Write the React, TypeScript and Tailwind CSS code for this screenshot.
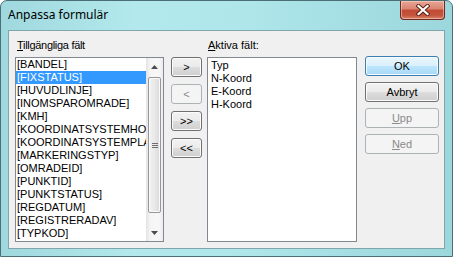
import React from "react";

const fields = [
  "[BANDEL]",
  "[FIXSTATUS]",
  "[HUVUDLINJE]",
  "[INOMSPAROMRADE]",
  "[KMH]",
  "[KOORDINATSYSTEMHOJD]",
  "[KOORDINATSYSTEMPLAN]",
  "[MARKERINGSTYP]",
  "[OMRADEID]",
  "[PUNKTID]",
  "[PUNKTSTATUS]",
  "[REGDATUM]",
  "[REGISTRERADAV]",
  "[TYPKOD]",
];

const active = ["Typ", "N-Koord", "E-Koord", "H-Koord"];

type BtnProps = {
  children: React.ReactNode;
  disabled?: boolean;
  isDefault?: boolean;
};

function WinButton({ children, disabled, isDefault }: BtnProps) {
  let look =
    "border-[#707070] text-black bg-[linear-gradient(to_bottom,#f2f2f2_0%,#ebebeb_50%,#dddddd_50%,#cfcfcf_100%)] shadow-[inset_0_0_0_1px_#fbfbfb]";
  if (isDefault)
    look =
      "border-[#3c7fb1] text-black bg-[linear-gradient(to_bottom,#eaf6fd_0%,#d9f0fc_50%,#bee6fd_50%,#a7d9f5_100%)] shadow-[inset_0_0_0_1px_#f4fbff]";
  if (disabled) look = "border-[#adb2b5] text-[#8a8a8a] bg-[#f4f4f4]";
  return (
    <div className={`flex h-[20px] items-center justify-center rounded-[3px] border text-[11px] leading-none ${look}`}>
      {children}
    </div>
  );
}

function Arrow({ up }: { up?: boolean }) {
  return (
    <svg width="7" height="4" viewBox="0 0 7 4">
      <path d={up ? "M0 4 L3.5 0 L7 4 Z" : "M0 0 L3.5 4 L7 0 Z"} fill="#4d4d4d" />
    </svg>
  );
}

function ScrollBar() {
  return (
    <div className="flex w-[17px] flex-col bg-[linear-gradient(to_right,#e3e3e3,#f5f5f5_25%,#f7f7f7_75%,#ececec)]">
      <div className="flex h-[17px] items-center justify-center">
        <Arrow up />
      </div>
      <div className="flex-1 px-[2px] pt-[2px]">
        <div className="flex h-[136px] items-center justify-center rounded-[2px] border border-[#979797] bg-[linear-gradient(to_right,#f3f3f3,#e9e9e9_50%,#d9d9d9)] shadow-[inset_0_0_0_1px_#fafafa]">
          <div className="flex flex-col gap-[1px]">
            <div className="h-[1px] w-[6px] bg-[#6f6f6f]" />
            <div className="h-[1px] w-[6px] bg-[#6f6f6f]" />
            <div className="h-[1px] w-[6px] bg-[#6f6f6f]" />
          </div>
        </div>
      </div>
      <div className="flex h-[17px] items-center justify-center">
        <Arrow />
      </div>
    </div>
  );
}

function CloseButton() {
  return (
    <div className="ml-auto mr-[7px] flex h-[19px] w-[45px] items-center justify-center rounded-b-[4px] border border-t-0 border-[#6e2a1e] bg-[linear-gradient(to_bottom,#e8a696_0%,#d98371_45%,#c24a33_50%,#c4563e_80%,#d8856a_100%)] shadow-[inset_0_0_0_1px_rgba(255,220,210,0.5)]">
      <svg width="14" height="12" viewBox="0 0 14 12">
        <path d="M2.5 2 L11.5 10 M11.5 2 L2.5 10" stroke="#5a1e14" strokeWidth="4" strokeLinecap="square" />
        <path d="M2.5 2 L11.5 10 M11.5 2 L2.5 10" stroke="#ffffff" strokeWidth="2.2" strokeLinecap="square" />
      </svg>
    </div>
  );
}

export default function App() {
  return (
    <div className="h-[257px] w-[453px] overflow-hidden bg-white font-['Liberation_Sans',Arial,sans-serif] text-[11px] text-black">
      <div className="flex h-full flex-col rounded-t-[7px] border border-[#4c6f75] bg-[linear-gradient(to_right,#9fd8de,#b3e9ec_30%,#aee6ea_55%,#9bd7dc)]">
        <div className="flex h-[29px] items-start">
          <span className="ml-[7px] mt-[6px] font-['Noto_Sans',sans-serif] text-[12px] leading-[16px]">
            Anpassa formulär
          </span>
          <CloseButton />
        </div>

        <div className="mx-[7px] mb-[7px] flex flex-1 border border-[#7fa6ab] bg-[#f0f0f0]">
          {/* available fields */}
          <div className="ml-[6px] w-[149px] pt-[8px]">
            <div className="mb-[5px] pl-[2px] leading-[13px] tracking-[-0.3px]">
              <span className="underline underline-offset-[1px]">T</span>illgängliga fält
            </div>
            <div className="flex h-[185px] border border-[#828790] bg-white">
              <div className="w-[130px] overflow-hidden">
                {fields.map((f, i) => (
                  <div
                    key={f}
                    className={`h-[13px] whitespace-nowrap pl-[1px] leading-[13px] ${
                      i === 1 ? "bg-[#3399ff] text-white" : ""
                    }`}
                  >
                    {f}
                  </div>
                ))}
              </div>
              <ScrollBar />
            </div>
          </div>

          {/* move buttons */}
          <div className="ml-[7px] flex w-[31px] flex-col gap-[7px] pt-[26px]">
            <WinButton>&gt;</WinButton>
            <WinButton disabled>&lt;</WinButton>
            <WinButton>&gt;&gt;</WinButton>
            <WinButton>&lt;&lt;</WinButton>
          </div>

          {/* active fields */}
          <div className="ml-[5px] w-[150px] pt-[8px]">
            <div className="mb-[5px] pl-[1px] leading-[13px]">
              <span className="underline underline-offset-[1px]">A</span>ktiva fält:
            </div>
            <div className="h-[185px] border border-[#828790] bg-white pt-[1px]">
              {active.map((a) => (
                <div key={a} className="h-[13px] pl-[3px] leading-[13px]">
                  {a}
                </div>
              ))}
            </div>
          </div>

          {/* dialog buttons */}
          <div className="ml-[8px] flex w-[74px] flex-col gap-[6px] pt-[25px]">
            <WinButton isDefault>OK</WinButton>
            <WinButton>Avbryt</WinButton>
            <WinButton disabled>
              <span>
                <span className="underline underline-offset-[1px]">U</span>pp
              </span>
            </WinButton>
            <WinButton disabled>
              <span>
                <span className="underline underline-offset-[1px]">N</span>ed
              </span>
            </WinButton>
          </div>
        </div>
      </div>
    </div>
  );
}
